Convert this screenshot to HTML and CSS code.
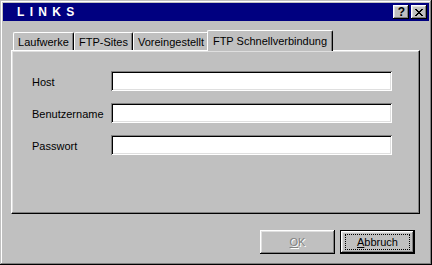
FILE: index.html
```html
<!DOCTYPE html>
<html>
<head>
<meta charset="utf-8">
<link rel="stylesheet" href="styles.css">
</head>
<body>
<div class="window">
  <div class="titlebar">
    <span class="title">LINKS</span>
    <div class="caption-buttons">
      <div class="cap-btn help">?</div>
      <div class="cap-btn close">
        <svg width="8" height="7" viewBox="0 0 8 7"><path d="M0 0h2v1h1v1h2v-1h1v-1h2v1h-1v1h-1v1h-1v1h1v1h1v1h1v1h-2v-1h-1v-1h-2v1h-1v1h-2v-1h1v-1h1v-1h1v-1h-1v-1h-1v-1h-1z" fill="#000"/></svg>
      </div>
    </div>
  </div>
  <div class="content">
    <div class="tabs">
      <div class="tab t1">Laufwerke</div>
      <div class="tab t2">FTP-Sites</div>
      <div class="tab t3">Voreingestellt</div>
      <div class="tab active t4">FTP Schnellverbindung</div>
    </div>
    <div class="panel">
      <div class="row"><label>Host</label><div class="input"></div></div>
      <div class="row"><label>Benutzername</label><div class="input"></div></div>
      <div class="row"><label>Passwort</label><div class="input"></div></div>
    </div>
    <div class="buttons">
      <div class="btn disabled"><span class="u">O</span>K</div>
      <div class="btn default"><span class="focus"><span class="u">A</span>bbruch</span></div>
    </div>
  </div>
</div>
</body>
</html>
```
FILE: styles.css
```css
html, body {
  margin: 0;
  padding: 0;
  background: #c0c0c0;
}
body {
  font-family: "Liberation Sans", Arial, sans-serif;
  font-size: 11px;
  color: #000;
}
.window {
  width: 432px;
  height: 265px;
  box-sizing: border-box;
  padding: 3px;
  background: #c0c0c0;
  box-shadow: inset -1px -1px #000, inset 1px 1px #c0c0c0, inset -2px -2px #808080, inset 2px 2px #fff;
  display: flex;
  flex-direction: column;
}
.titlebar {
  height: 18px;
  background: #000080;
  display: flex;
  align-items: center;
  justify-content: space-between;
  padding-left: 14px;
  padding-right: 2px;
}
.title {
  color: #fff;
  font-weight: bold;
  font-size: 12px;
  letter-spacing: 5.3px;
}
.caption-buttons {
  display: flex;
  gap: 2px;
}
.cap-btn {
  width: 16px;
  height: 14px;
  box-sizing: border-box;
  background: #c0c0c0;
  box-shadow: inset -1px -1px #000, inset 1px 1px #fff, inset -2px -2px #808080, inset 2px 2px #dfdfdf;
  display: flex;
  align-items: center;
  justify-content: center;
}
.help {
  font-weight: bold;
  font-size: 12px;
  line-height: 14px;
  padding-left: 1px;
}
.close svg {
  display: block;
  margin-left: 0px;
}
.content {
  flex: 1;
  display: flex;
  flex-direction: column;
  padding: 9px 9px 0 8px;
}
.tabs {
  display: flex;
  align-items: flex-end;
  height: 20px;
  padding-left: 2px;
  position: relative;
  z-index: 1;
}
.tab {
  height: 18px;
  box-sizing: border-box;
  padding-top: 3px;
  text-align: center;
  background: #c0c0c0;
  border-top: 1px solid #fff;
  border-left: 1px solid #fff;
  border-right: 1px solid #000;
  box-shadow: inset -1px 0 #808080;
  border-top-left-radius: 2px;
  border-top-right-radius: 2px;
  white-space: nowrap;
}
.t1 { width: 61px; }
.t2 { width: 59px; }
.t3 { width: 76px; }
.t4 { width: 126px; }
.tab.active {
  height: 21px;
  margin-left: -2px;
  margin-bottom: -1px;
  padding-top: 4px;
}
.panel {
  width: 409px;
  height: 164px;
  box-sizing: border-box;
  border-top: 1px solid #fff;
  border-left: 1px solid #fff;
  border-right: 1px solid #000;
  border-bottom: 1px solid #000;
  box-shadow: inset -1px -1px #808080, inset 1px 1px #dfdfdf;
  padding: 20px 0 0 20px;
  display: flex;
  flex-direction: column;
  gap: 12px;
}
.row {
  display: flex;
  align-items: center;
  height: 20px;
}
.row label {
  width: 79px;
  padding-top: 1px;
}
.input {
  width: 281px;
  height: 20px;
  box-sizing: border-box;
  background: #fff;
  box-shadow: inset 1px 1px #808080, inset -1px -1px #fff, inset 2px 2px #000, inset -2px -2px #dfdfdf;
}
.buttons {
  display: flex;
  justify-content: flex-end;
  gap: 5px;
  margin-top: 16px;
  padding-right: 5px;
}
.btn {
  width: 75px;
  height: 24px;
  box-sizing: border-box;
  display: flex;
  align-items: center;
  justify-content: center;
  background: #c0c0c0;
  box-shadow: inset -1px -1px #000, inset 1px 1px #fff, inset -2px -2px #808080, inset 2px 2px #dfdfdf;
}
.btn.disabled {
  color: #808080;
  text-shadow: 1px 1px #fff;
}
.btn.default {
  border: 1px solid #000;
  box-shadow: inset -1px -1px #000, inset 1px 1px #fff, inset -2px -2px #808080, inset 2px 2px #dfdfdf;
}
.focus {
  display: flex;
  align-items: center;
  justify-content: center;
  width: 63px;
  height: 14px;
  border: 1px dotted #000;
}
.u {
  text-decoration: underline;
}
```
